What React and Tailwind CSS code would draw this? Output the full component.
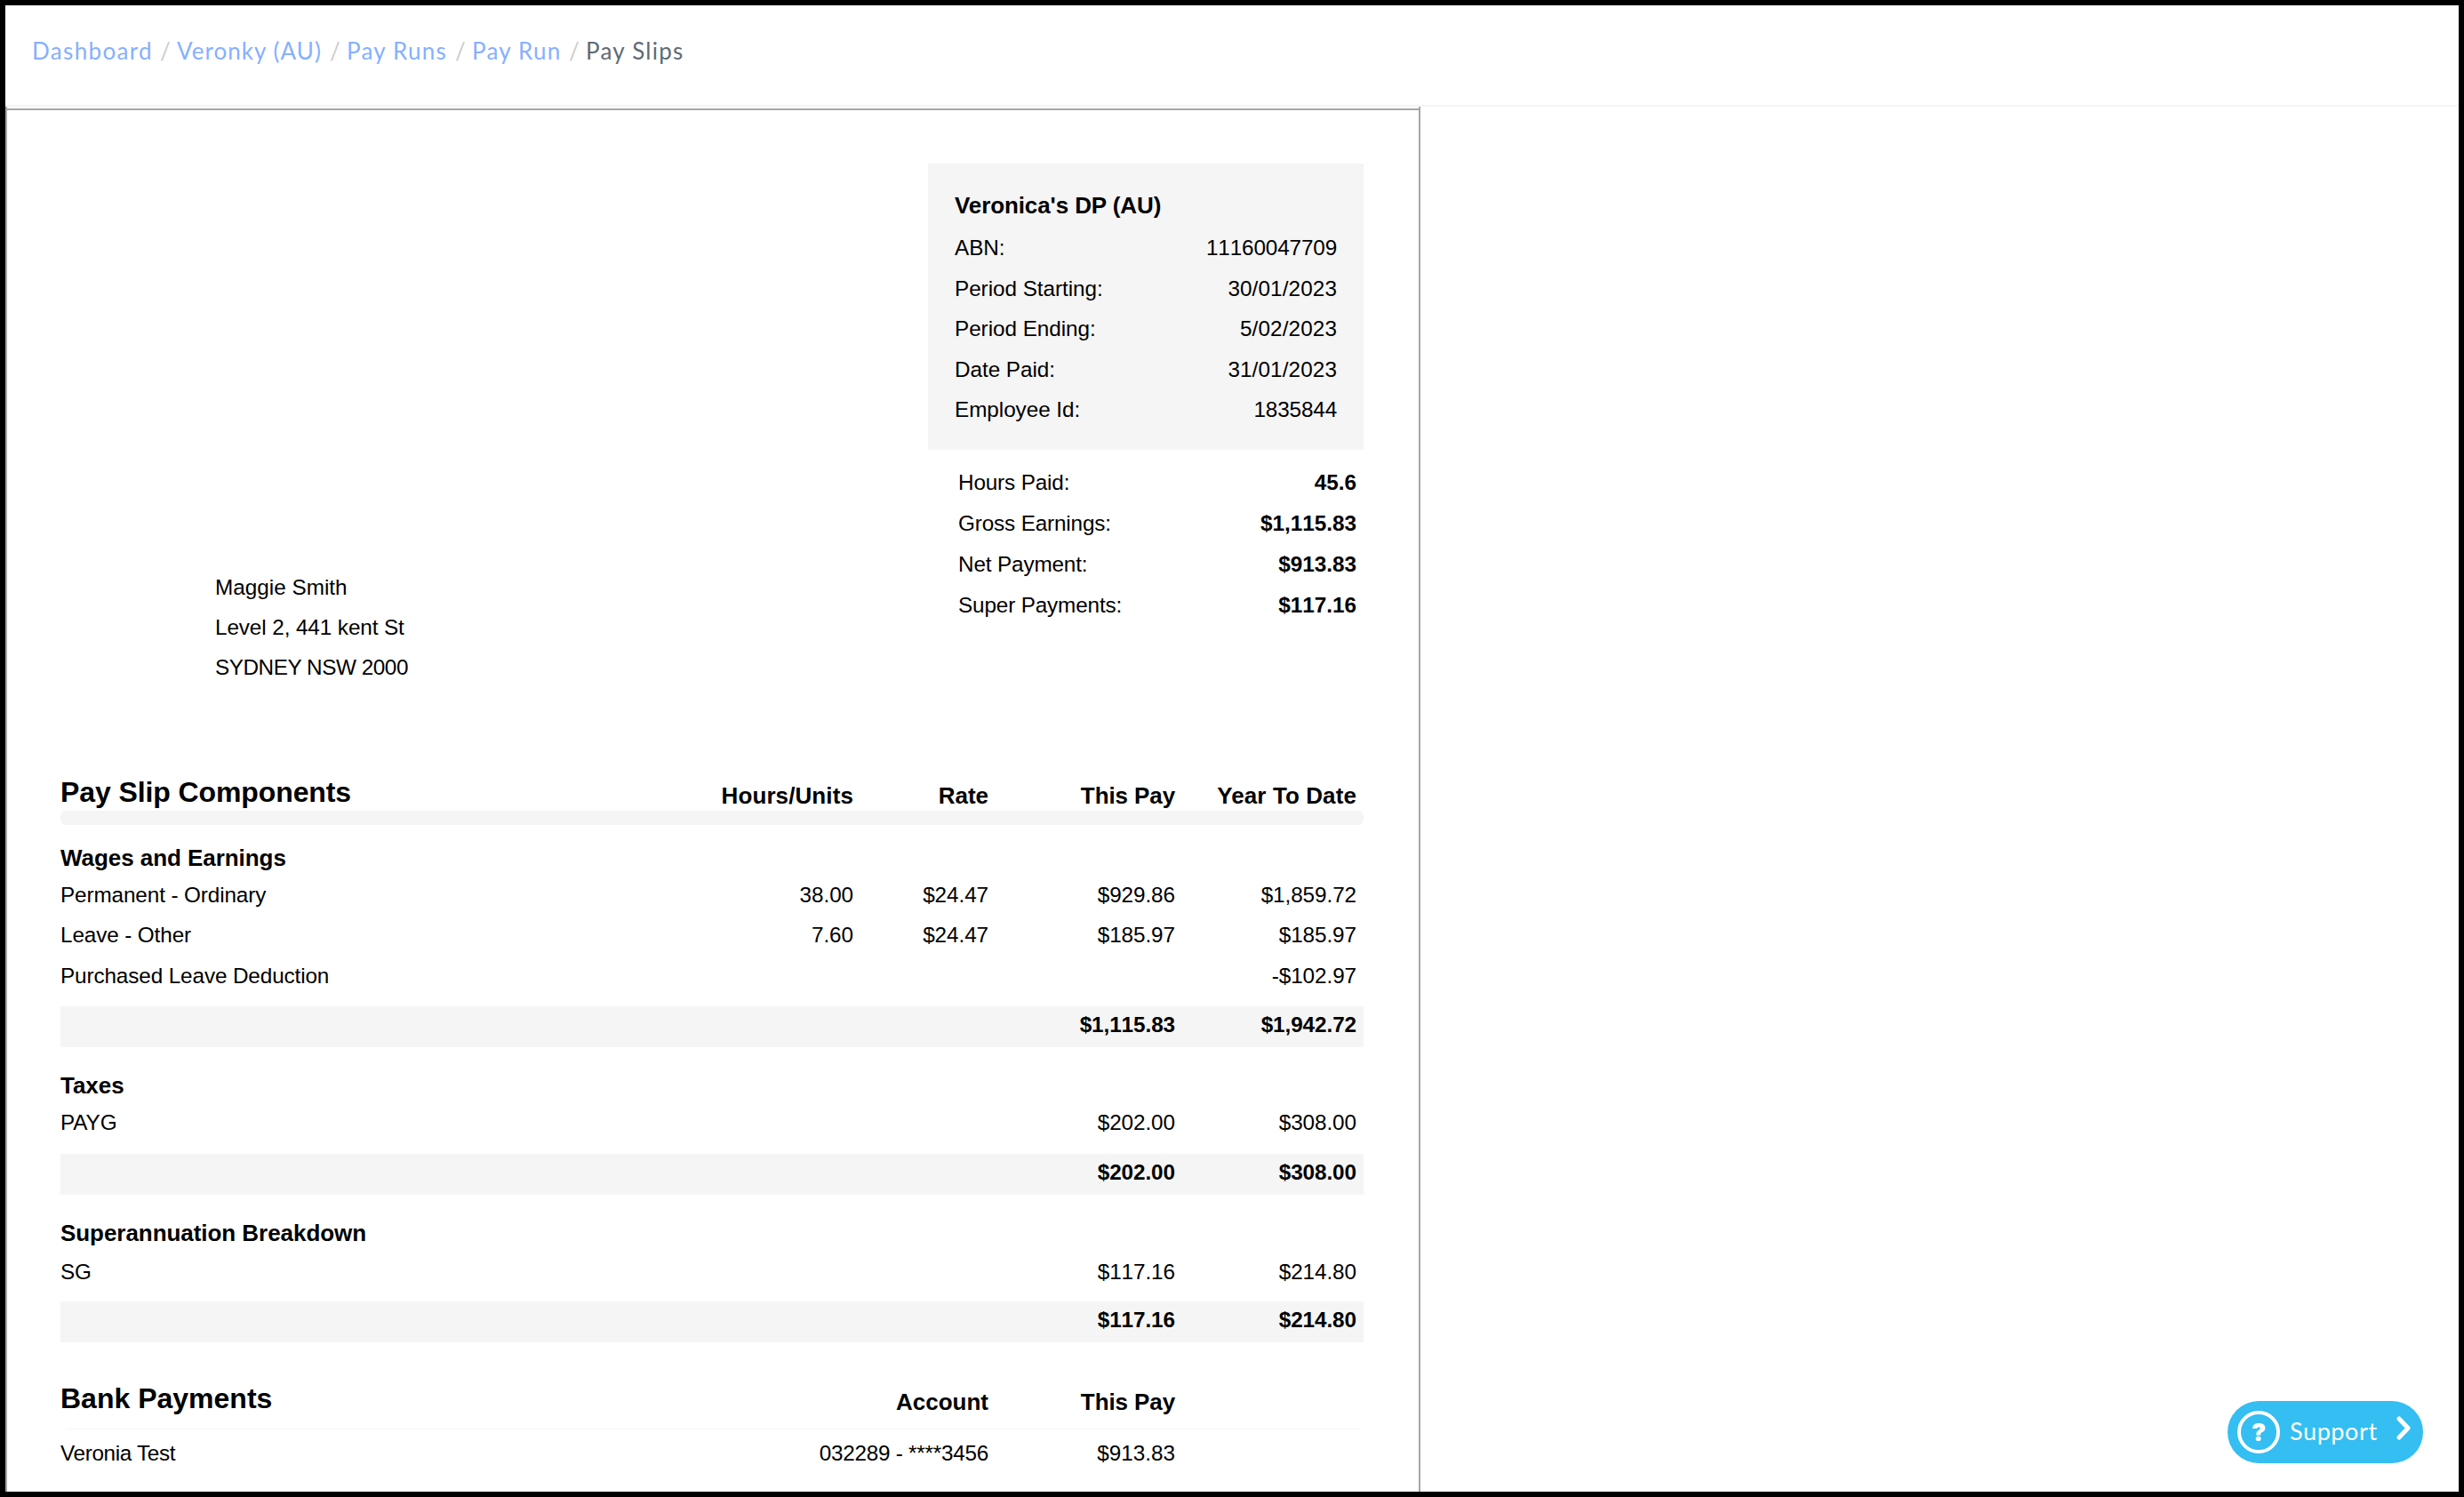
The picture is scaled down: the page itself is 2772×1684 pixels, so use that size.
import React from 'react';

const crumbs = [
  { label: 'Dashboard', box: 'w-[144px]', track: 'tracking-[1.35px]' },
  { label: 'Veronky (AU)', box: 'w-[172px]', track: 'tracking-[1.05px]' },
  { label: 'Pay Runs', box: 'w-[122px]', track: 'tracking-[1.2px]' },
  { label: 'Pay Run', box: 'w-[109px]', track: 'tracking-[1.2px]' },
];

const period = [
  ['ABN:', '11160047709'],
  ['Period Starting:', '30/01/2023'],
  ['Period Ending:', '5/02/2023'],
  ['Date Paid:', '31/01/2023'],
  ['Employee Id:', '1835844'],
];

const summary = [
  ['Hours Paid:', '45.6'],
  ['Gross Earnings:', '$1,115.83'],
  ['Net Payment:', '$913.83'],
  ['Super Payments:', '$117.16'],
];

const sections = [
  {
    title: 'Wages and Earnings',
    rows: [
      ['Permanent - Ordinary', '38.00', '$24.47', '$929.86', '$1,859.72'],
      ['Leave - Other', '7.60', '$24.47', '$185.97', '$185.97'],
      ['Purchased Leave Deduction', '', '', '', '-$102.97'],
    ],
    total: ['$1,115.83', '$1,942.72'],
    rowsBox: 'h-[150px] pt-[2px]',
  },
  {
    title: 'Taxes',
    rows: [['PAYG', '', '', '$202.00', '$308.00']],
    total: ['$202.00', '$308.00'],
    rowsBox: 'h-[60px] pt-[2px]',
  },
  {
    title: 'Superannuation Breakdown',
    rows: [['SG', '', '', '$117.16', '$214.80']],
    total: ['$117.16', '$214.80'],
    rowsBox: 'h-[60px] pt-[4px]',
  },
];

const cols = 'grid grid-cols-[700px_192px_152px_210px_204px_8px] text-right';

const Row = ({ cells, className = '' }) => (
  <div className={`${cols} ${className}`}>
    <span className="text-left whitespace-nowrap tracking-[-0.12px]">{cells[0]}</span>
    {cells.slice(1).map((cell, i) => (
      <span key={i} className="flex justify-end whitespace-nowrap tracking-[-0.08px] [font-kerning:none]">{cell}</span>
    ))}
  </div>
);

const Breadcrumbs = () => (
  <nav className="h-[114px] shrink-0 border-b-2 border-[#f5f5f5] pl-[30px] pt-[31px] flex items-start font-[Lato,sans-serif] text-[26px] leading-[40px] text-[#86b0ff]">
    {crumbs.map((c) => (
      <div key={c.label} className="flex whitespace-nowrap">
        <a className={`${c.box} ${c.track}`}>{c.label}</a>
        <span className="w-[19px] text-[#ccc]">/</span>
      </div>
    ))}
    <span className="tracking-[1.25px] text-[#5f6b76]">Pay Slips</span>
  </nav>
);

const Section = ({ section }) => (
  <section>
    <h3 className="h-[40px] text-[26px] leading-[46px] font-bold tracking-[-0.05px]">{section.title}</h3>
    <div className={section.rowsBox}>
      {section.rows.map((r) => (
        <Row key={r[0]} cells={r} className="h-[45.3px] leading-[46px]" />
      ))}
    </div>
    <Row
      cells={['', '', '', ...section.total]}
      className="h-[46px] bg-[#f5f5f5] leading-[42px] font-bold"
    />
  </section>
);

const SupportButton = () => (
  <button className="absolute left-[2500px] top-[1570px] w-[220px] h-[70px] rounded-full bg-[#34bef1] text-white flex items-center pl-[11px]">
    <span className="w-[48px] h-[48px] rounded-full border-4 border-white flex items-center justify-center font-[Inter,sans-serif] text-[27px] leading-none font-black">
      ?
    </span>
    <span className="ml-[11px] -mt-[2px] w-[119px] text-left font-[Lato,sans-serif] text-[27px] tracking-[0.6px] leading-[36px]">
      Support
    </span>
    <svg className="w-[18px] h-[28px] -mt-[10px]" viewBox="0 0 18 28" fill="none" stroke="white" strokeWidth="5" strokeLinecap="round" strokeLinejoin="round">
      <path d="M4 4L14 14.5L4 25" />
    </svg>
  </button>
);

const App = () => {
  return (
    <div className="relative w-[2772px] h-[1684px] border-[6px] border-black bg-white overflow-hidden flex flex-col font-['Liberation_Sans',sans-serif] text-[24.3px] text-black">
      <Breadcrumbs />

      <div className="w-[1592px] flex-1 min-h-0 border-x-2 border-[#a6a6a6] pt-[2px]">
        <div className="border-t-2 border-[#a6a6a6] pt-[60px] pl-[60px]">
          <div className="flex h-[693px] w-[1466px]">
            <address className="w-[976px] pl-[174px] pt-[454px] not-italic leading-[45px]">
              <div>Maggie Smith</div>
              <div className="tracking-[-0.1px]">Level 2, 441 kent St</div>
              <div className="tracking-[-0.45px]">SYDNEY NSW 2000</div>
            </address>

            <div className="w-[490px]">
              <div className="h-[322px] bg-[#f5f5f5] px-[30px] pt-[24px]">
                <h2 className="h-[48px] text-[26px] leading-[46px] font-bold tracking-[-0.1px]">Veronica's DP (AU)</h2>
                {period.map(([label, value]) => (
                  <div key={label} className="flex justify-between leading-[45.5px]">
                    <span className="tracking-[-0.05px]">{label}</span>
                    <span className={value.includes('/') ? 'tracking-[0.1px]' : 'tracking-[-0.15px] [font-kerning:none]'}>
                      {value}
                    </span>
                  </div>
                ))}
              </div>
              <div className="pl-[34px] pr-[8px] pt-[14px]">
                {summary.map(([label, value]) => (
                  <div key={label} className="flex justify-between leading-[46px]">
                    <span className="tracking-[-0.15px]">{label}</span>
                    <b className="[font-kerning:none]">{value}</b>
                  </div>
                ))}
              </div>
            </div>
          </div>

          <div className="w-[1466px]">
            <div className={`${cols} h-[35px] items-start text-[26px] leading-[36px] font-bold`}>
              <h1 className="text-left text-[32px] leading-[29px] tracking-[-0.1px]">Pay Slip Components</h1>
              <span className="tracking-[0.1px]">Hours/Units</span>
              <span>Rate</span>
              <span className="tracking-[-0.1px]">This Pay</span>
              <span className="tracking-[0.1px]">Year To Date</span>
            </div>
            <div className="h-[16px] rounded-[6px] bg-[#f5f5f5]" />

            <div className="flex flex-col gap-[20px] pt-[14px]">
              {sections.map((s) => (
                <Section key={s.title} section={s} />
              ))}
            </div>

            <div className={`${cols} mt-[42px] h-[55px] items-start text-[26px] leading-[50px] font-bold`}>
              <h1 className="text-left text-[32px] leading-[43px]">Bank Payments</h1>
              <span />
              <span>Account</span>
              <span className="tracking-[-0.1px]">This Pay</span>
            </div>
            <div className="ml-2 mr-1 h-px bg-[#f6f6f6]" />
            <div className={`${cols} pt-[4px] leading-[46px]`}>
              <span className="text-left tracking-[-0.35px]">Veronia Test</span>
              <span />
              <span className="flex justify-end whitespace-nowrap tracking-[-0.25px]">032289 - ****3456</span>
              <span>$913.83</span>
            </div>
          </div>
        </div>
      </div>

      <SupportButton />
    </div>
  );
};

export default App;
